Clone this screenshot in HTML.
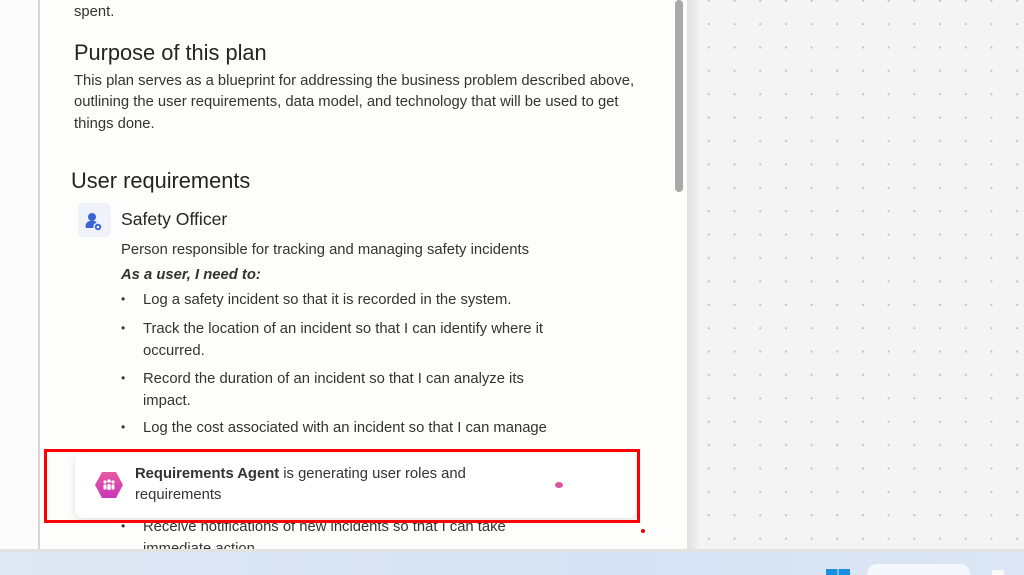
<!DOCTYPE html>
<html><head><meta charset="utf-8"><style>
*{margin:0;padding:0;box-sizing:border-box}
html,body{width:1024px;height:575px;overflow:hidden}
body{position:relative;background:#f4f4f4;font-family:"Liberation Sans",sans-serif;color:#2b2b2b}
.dots{position:absolute;left:687px;top:0;width:337px;height:550px;background-color:#f4f4f4;background-image:radial-gradient(circle,#c4c4c4 0.9px,transparent 1.3px);background-size:25.7px 23.4px;background-position:9px -11px}
.shadow{position:absolute;left:687px;top:0;width:14px;height:550px;background:linear-gradient(90deg,rgba(0,0,0,0.08),rgba(0,0,0,0))}
.left{position:absolute;left:0;top:0;width:38px;height:550px;background:#fbfbfb}
.lline{position:absolute;left:38px;top:0;width:2px;height:550px;background:#d6d6d6}
.panel{position:absolute;left:40px;top:0;width:647px;height:550px;background:#fdfdfc;overflow:hidden}
.t{position:absolute;white-space:nowrap;font-size:14.8px;line-height:17px;color:#333}
.h{font-size:21.8px;line-height:25px;color:#242424}
.sb{position:absolute;left:675px;top:0;width:8px;height:192px;background:#a9a9a9;border-radius:4px}
.bot{position:absolute;left:0;top:549px;width:1024px;height:3px;background:#e2e2e2}
.task{position:absolute;left:0;top:552px;width:1024px;height:23px;background:linear-gradient(90deg,#dfe8f4,#d6e2f3 60%,#dce6f5)}
.pop{position:absolute;left:75px;top:453px;width:561px;height:65px;background:#fff;border-radius:8px;box-shadow:0 2px 8px rgba(0,0,0,0.12)}
.red{position:absolute;left:44px;top:449px;width:596px;height:74px;border:3px solid #f00}
.bul{position:absolute;font-size:12px;color:#333}
</style></head><body>
<div class="left"></div><div class="lline"></div>
<div class="panel">
<div class="t" style="left:34px;top:4px">spent.</div>
<div class="t h" style="left:34px;top:40px">Purpose of this plan</div>
<div class="t" style="left:34px;top:73px">This plan serves as a blueprint for addressing the business problem described above,</div>
<div class="t" style="left:34px;top:94px">outlining the user requirements, data model, and technology that will be used to get</div>
<div class="t" style="left:34px;top:116px">things done.</div>
<div class="t h" style="left:31px;top:168px">User requirements</div>
<div style="position:absolute;left:38px;top:203px;width:33px;height:34px;background:#f0f2fa;border-radius:5px">
<svg width="33" height="34" viewBox="0 0 33 34"><circle cx="14" cy="14" r="4" fill="#3b63d6"/><path d="M8 25 a6 5 0 0 1 12 -4 v4 z" fill="#3b63d6"/><circle cx="20" cy="24" r="4" fill="#3b63d6" stroke="#f0f2fa" stroke-width="1.5"/><circle cx="20" cy="24" r="1.3" fill="#f0f2fa"/></svg></div>
<div class="t" style="left:81px;top:209px;font-size:17.6px;line-height:21px;color:#242424">Safety Officer</div>
<div class="t" style="left:81px;top:242px">Person responsible for tracking and managing safety incidents</div>
<div class="t" style="left:81px;top:267px;font-weight:bold;font-style:italic">As a user, I need to:</div>
<div class="bul" style="left:81px;top:292px">•</div><div class="t" style="left:103px;top:292px">Log a safety incident so that it is recorded in the system.</div>
<div class="bul" style="left:81px;top:321px">•</div><div class="t" style="left:103px;top:321px">Track the location of an incident so that I can identify where it</div>
<div class="t" style="left:103px;top:343px">occurred.</div>
<div class="bul" style="left:81px;top:371px">•</div><div class="t" style="left:103px;top:371px">Record the duration of an incident so that I can analyze its</div>
<div class="t" style="left:103px;top:393px">impact.</div>
<div class="bul" style="left:81px;top:420px">•</div><div class="t" style="left:103px;top:420px">Log the cost associated with an incident so that I can manage</div>
<div class="bul" style="left:81px;top:519px">•</div><div class="t" style="left:103px;top:519px">Receive notifications of new incidents so that I can take</div>
<div class="t" style="left:103px;top:541px">immediate action.</div>
</div>
<div class="sb"></div>
<div class="dots"></div><div class="shadow"></div>
<div class="pop">
<svg style="position:absolute;left:19px;top:17px" width="30" height="30" viewBox="0 0 30 30"><defs><linearGradient id="g" x1="0" y1="0" x2="0" y2="1"><stop offset="0" stop-color="#e85aa0"/><stop offset="1" stop-color="#c737b8"/></linearGradient></defs><path d="M8 2 H22 L29 15 L22 28 H8 L1 15 Z" fill="url(#g)"/><circle cx="11" cy="12" r="1.6" fill="#fff"/><circle cx="15" cy="11" r="1.8" fill="#fff"/><circle cx="19" cy="12" r="1.6" fill="#fff"/><rect x="9.5" y="14.5" width="3" height="5" rx="1" fill="#fff"/><rect x="13.3" y="14" width="3.4" height="6" rx="1" fill="#fff"/><rect x="17.5" y="14.5" width="3" height="5" rx="1" fill="#fff"/></svg>
<div class="t" style="left:60px;top:13px;color:#333"><b>Requirements Agent</b> is generating user roles and</div>
<div class="t" style="left:60px;top:34px;color:#333">requirements</div>
<div style="position:absolute;left:480px;top:29px;width:8px;height:6px;border-radius:50%;background:#d9559e"></div>
</div>
<div class="red"></div>
<div style="position:absolute;left:641px;top:529px;width:4px;height:4px;border-radius:50%;background:#e00"></div>
<div class="bot"></div>
<div class="task">
<div style="position:absolute;left:826px;top:17px;width:24px;height:6px;background:linear-gradient(90deg,#1a8fe0 0 48%,transparent 48% 52%,#1a8fe0 52%)"></div>
<div style="position:absolute;left:867px;top:12px;width:103px;height:20px;border-radius:10px;background:#f4f7fc"></div>
<div style="position:absolute;left:992px;top:18px;width:12px;height:6px;background:#fafafa"></div>
</div>
</body></html>
